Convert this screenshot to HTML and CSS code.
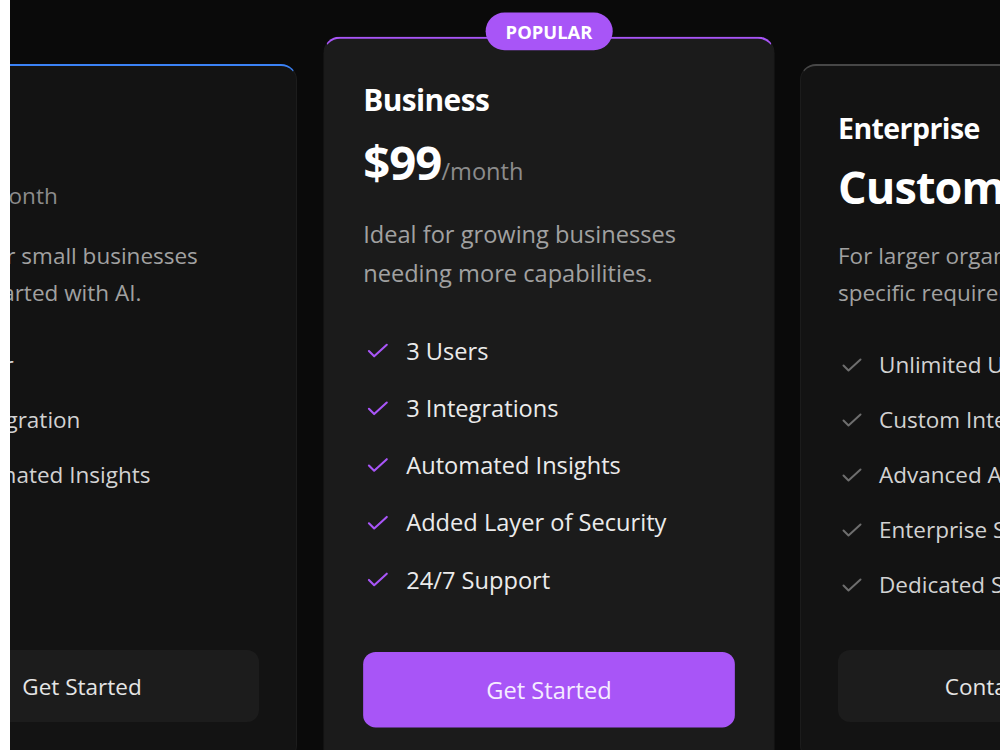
FILE: index.html
```html
<!DOCTYPE html>
<html lang="en">
<head>
    <meta charset="UTF-8">
    <meta name="viewport" content="width=device-width, initial-scale=1.0">
    <title>Pricing</title>
    <link rel="stylesheet" href="styles.css">
</head>
<body>

<main class="pricing">
    <div class="plans">

        <section class="plan plan-starter">
            <h3 class="plan-name">Starter</h3>
            <p class="plan-price">$29<span class="per">/month</span></p>
            <p class="plan-desc">Perfect for small businesses getting started with AI.</p>
            <ul class="features">
                <li><svg viewBox="0 0 24 24"><path d="M5.5 12.5l5 5L22.5 6.5"/></svg>1 User</li>
                <li><svg viewBox="0 0 24 24"><path d="M5.5 12.5l5 5L22.5 6.5"/></svg>1 Integration</li>
                <li><svg viewBox="0 0 24 24"><path d="M5.5 12.5l5 5L22.5 6.5"/></svg>Automated Insights</li>
            </ul>
            <button class="btn">Get Started</button>
        </section>

        <section class="plan plan-popular">
            <span class="badge">POPULAR</span>
            <h3 class="plan-name">Business</h3>
            <p class="plan-price">$99<span class="per">/month</span></p>
            <p class="plan-desc">Ideal for growing businesses needing more capabilities.</p>
            <ul class="features">
                <li><svg viewBox="0 0 24 24"><path d="M5.5 12.5l5 5L22.5 6.5"/></svg>3 Users</li>
                <li><svg viewBox="0 0 24 24"><path d="M5.5 12.5l5 5L22.5 6.5"/></svg>3 Integrations</li>
                <li><svg viewBox="0 0 24 24"><path d="M5.5 12.5l5 5L22.5 6.5"/></svg>Automated Insights</li>
                <li><svg viewBox="0 0 24 24"><path d="M5.5 12.5l5 5L22.5 6.5"/></svg>Added Layer of Security</li>
                <li><svg viewBox="0 0 24 24"><path d="M5.5 12.5l5 5L22.5 6.5"/></svg>24/7 Support</li>
            </ul>
            <button class="btn btn-primary">Get Started</button>
        </section>

        <section class="plan plan-enterprise">
            <h3 class="plan-name">Enterprise</h3>
            <p class="plan-price">Custom</p>
            <p class="plan-desc">For larger organizations with specific requirements.</p>
            <ul class="features">
                <li><svg viewBox="0 0 24 24"><path d="M5.5 12.5l5 5L22.5 6.5"/></svg>Unlimited Users</li>
                <li><svg viewBox="0 0 24 24"><path d="M5.5 12.5l5 5L22.5 6.5"/></svg>Custom Integrations</li>
                <li><svg viewBox="0 0 24 24"><path d="M5.5 12.5l5 5L22.5 6.5"/></svg>Advanced Analytics</li>
                <li><svg viewBox="0 0 24 24"><path d="M5.5 12.5l5 5L22.5 6.5"/></svg>Enterprise Security</li>
                <li><svg viewBox="0 0 24 24"><path d="M5.5 12.5l5 5L22.5 6.5"/></svg>Dedicated Support</li>
            </ul>
            <button class="btn">Contact Sales</button>
        </section>

    </div>
</main>

</body>
</html>
```

FILE: styles.css
```css
* {
    box-sizing: border-box;
}

body {
    margin: 0;
    background-color: #ffffff;
    font-family: 'Open Sans', 'Noto Sans', sans-serif;
}

.pricing {
    margin-left: 10px;
    height: 750px;
    background-color: #0a0a0a;
    overflow: hidden;
}

/* row of plan cards, scrolled so the first card is cut off on the left */
.plans {
    display: flex;
    gap: 36.5px;
    margin-left: -143px;
    padding-top: 64px;
}

.plan {
    position: relative;
    flex: none;
    width: 430px;
    display: flex;
    flex-direction: column;
    padding: 42px 37px 37.5px;
    background-color: #131313;
    border: 1px solid #1c1c1c;
    border-top: 2px solid #474747;
    border-radius: 16px;
    color: #ffffff;
}

.plan-starter {
    border-top-color: #3b82f6;
}

.plan-popular {
    padding-top: 38px;
    background-color: #1b1b1b;
    border-top-color: #a855f7;
    transform: translateY(-10px) scale(1.05);
    z-index: 1;
}

.badge {
    position: absolute;
    top: -25px;
    left: 50%;
    transform: translateX(-50%);
    height: 36px;
    padding: 0 19px;
    border-radius: 18px;
    background-color: #a855f7;
    color: #ffffff;
    font-size: 17.5px;
    font-weight: 700;
    line-height: 36px;
}

.plan-name {
    margin: 0;
    font-size: 28.5px;
    line-height: 40px;
    font-weight: 700;
    letter-spacing: -0.02em;
}

.plan-price {
    margin: 14px 0 0;
    font-size: 45px;
    line-height: 50px;
    font-weight: 700;
    letter-spacing: -0.02em;
}

.plan-popular .plan-price {
    margin-top: 15px;
}

.per {
    font-size: 22.5px;
    font-weight: 400;
    line-height: 1;
    letter-spacing: normal;
    color: #8c8c8c;
}

.plan-desc {
    margin: 26px 0 0;
    font-size: 22.5px;
    line-height: 36.5px;
    color: #a1a1a1;
}

.features {
    list-style: none;
    margin: 36px 0 48px;
    padding: 0;
    display: flex;
    flex-direction: column;
    gap: 20px;
}

.plan-popular .features {
    margin-top: 37.5px;
    gap: 19.5px;
}

.features li {
    display: flex;
    align-items: center;
    gap: 17px;
    font-size: 22.5px;
    line-height: 35px;
    color: #d2d2d2;
}

.features svg {
    flex: none;
    width: 24px;
    height: 24px;
    fill: none;
    stroke: #6e6e6e;
    stroke-width: 2;
    stroke-linecap: round;
    stroke-linejoin: round;
}

.plan-popular .features li {
    color: #ebebeb;
}

.plan-popular .features svg {
    stroke: #a855f7;
}

.btn {
    margin-top: auto;
    height: 72px;
    border: none;
    border-radius: 12px;
    background-color: #1c1c1c;
    color: #e5e5e5;
    font-family: inherit;
    font-size: 22.5px;
    cursor: pointer;
}

.btn-primary {
    background-color: #a855f7;
    color: #f5ecff;
}
```
